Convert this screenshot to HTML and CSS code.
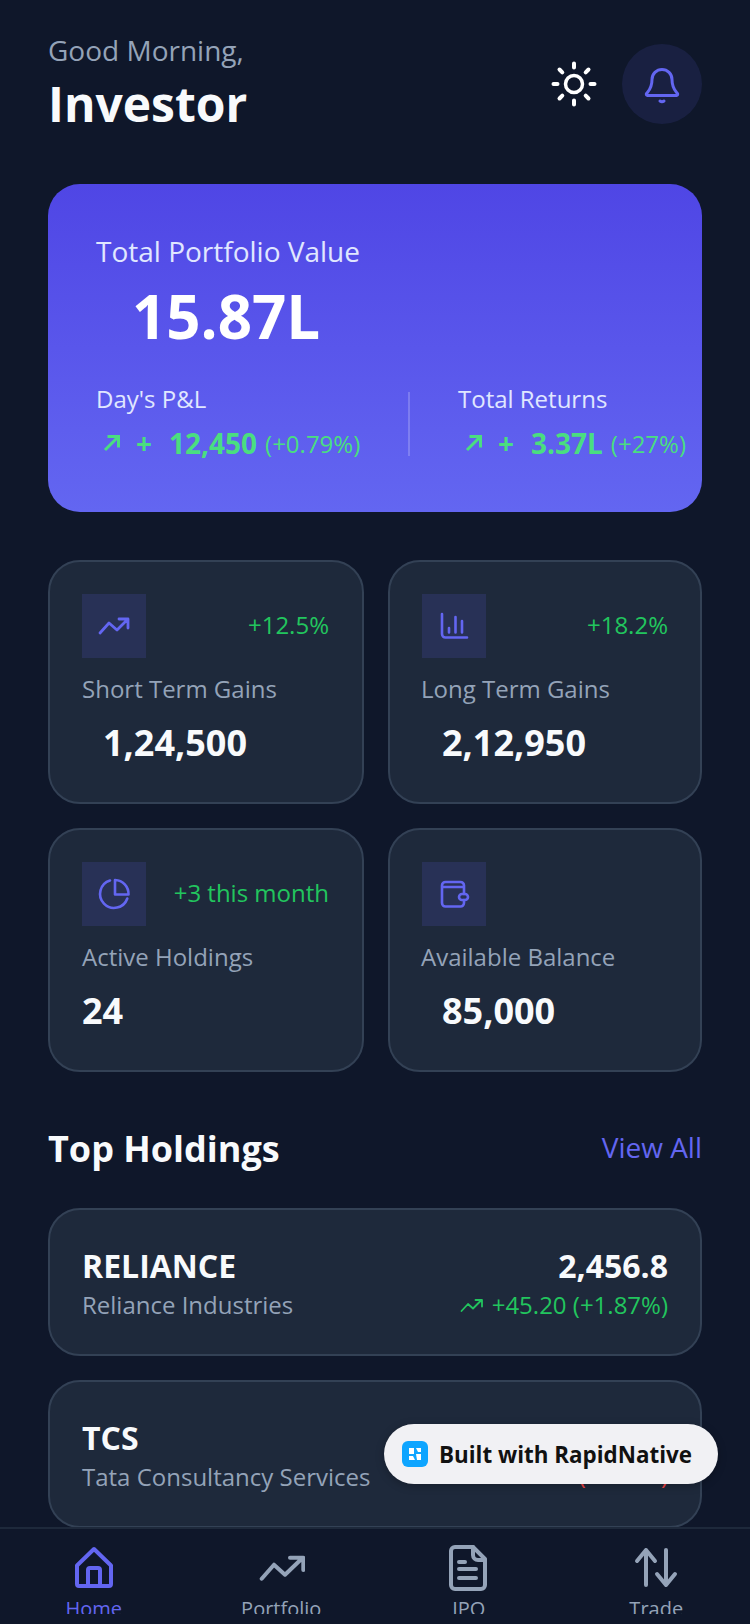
FILE: index.html
```html
<!DOCTYPE html>
<html lang="en">
<head>
<meta charset="utf-8">
<title>Investor Dashboard</title>
<link rel="stylesheet" href="styles.css">
</head>
<body>
<div class="screen">
  <main class="scroll">
    <header class="header">
      <div>
        <div class="greeting">Good Morning,</div>
        <div class="name">Investor</div>
      </div>
      <div class="header-actions">
        <svg class="sun" width="46" height="46" viewBox="0 0 46 46" fill="none" stroke="#fff" stroke-linecap="round">
          <circle cx="23" cy="23" r="8.500" stroke-width="3.500"/>
          <path stroke-width="4" d="M23 2.500v4M23 39.500v4M2.500 23h4M39.500 23h4M8.500 8.500l2.800 2.800M34.700 34.700l2.800 2.800M8.500 37.500l2.800-2.800M34.700 11.300l2.800-2.800"/>
        </svg>
        <div class="bell-btn">
          <svg width="48" height="48" viewBox="0 0 48 48" fill="none" stroke="#6366f1" stroke-width="3" stroke-linecap="round" stroke-linejoin="round">
            <path d="M14 19.500a10 10 0 0 1 20 0c0 9 3.500 11.500 5.500 14a1.300 1.300 0 0 1-1 2h-29a1.300 1.300 0 0 1-1-2c2-2.500 5.500-5 5.500-14z"/>
            <path d="M22 41q2 1.500 4 0"/>
          </svg>
        </div>
      </div>
    </header>

    <section class="hero">
      <div class="hero-label">Total Portfolio Value</div>
      <div class="hero-value">15.87L</div>
      <div class="hero-row">
        <div class="hero-col">
          <div class="hero-sub">Day's P&amp;L</div>
          <div class="hero-change">
            <svg class="hero-arrow" width="18" height="18" viewBox="0 0 18 18" fill="none" stroke="#4ade80" stroke-width="3"><path d="M2 16L15.500 2.500M4.500 2.500h11v11"/></svg>
            <span class="hero-plus">+</span>
            <span class="hero-amount">12,450</span>
            <span class="hero-pct">(+0.79%)</span>
          </div>
        </div>
        <div class="hero-divider"></div>
        <div class="hero-col">
          <div class="hero-sub">Total Returns</div>
          <div class="hero-change">
            <svg class="hero-arrow" width="18" height="18" viewBox="0 0 18 18" fill="none" stroke="#4ade80" stroke-width="3"><path d="M2 16L15.500 2.500M4.500 2.500h11v11"/></svg>
            <span class="hero-plus">+</span>
            <span class="hero-amount">3.37L</span>
            <span class="hero-pct">(+27%)</span>
          </div>
        </div>
      </div>
    </section>

    <section class="stats">
      <article class="card stat">
        <div class="stat-top">
          <div class="icon-box">
            <svg width="64" height="64" viewBox="0 0 64 64" fill="none" stroke="#6366f1" stroke-width="2.800" stroke-linecap="round" stroke-linejoin="round"><path d="M18 39l9-10 8 7 10.500-10.500M37 25h9v9"/></svg>
          </div>
          <span class="stat-delta">+12.5%</span>
        </div>
        <div class="stat-label">Short Term Gains</div>
        <div class="stat-value gap-rupee">1,24,500</div>
      </article>
      <article class="card stat">
        <div class="stat-top">
          <div class="icon-box">
            <svg width="64" height="64" viewBox="0 0 64 64" fill="none" stroke="#6366f1" stroke-width="2.600" stroke-linecap="round" stroke-linejoin="round"><path d="M20 20v20a3.500 3.500 0 0 0 3.500 3.500H45M27 34v4.500M33.500 23v15.500M40 27v11.500"/></svg>
          </div>
          <span class="stat-delta">+18.2%</span>
        </div>
        <div class="stat-label">Long Term Gains</div>
        <div class="stat-value gap-rupee">2,12,950</div>
      </article>
      <article class="card stat">
        <div class="stat-top">
          <div class="icon-box">
            <svg width="64" height="64" viewBox="0 0 64 64" fill="none" stroke="#6366f1" stroke-width="2.600" stroke-linecap="round" stroke-linejoin="round"><path d="M28 18.500A14 14 0 1 0 45.300 36.500M33 18v14.500h13.500A14 14 0 0 0 33 18z"/></svg>
          </div>
          <span class="stat-delta">+3 this month</span>
        </div>
        <div class="stat-label">Active Holdings</div>
        <div class="stat-value">24</div>
      </article>
      <article class="card stat">
        <div class="stat-top">
          <div class="icon-box">
            <svg width="64" height="64" viewBox="0 0 64 64" fill="none" stroke="#6366f1" stroke-width="2.600" stroke-linecap="round" stroke-linejoin="round"><path d="M42 32v-8.500a3.500 3.500 0 0 0-3.500-3.500H23.500a3.500 3.500 0 0 0-3.500 3.500V41a3.500 3.500 0 0 0 3.500 3.500h15A3.500 3.500 0 0 0 42 41v-3M20 25h22"/><rect x="37" y="32" width="9" height="6" rx="3"/></svg>
          </div>
        </div>
        <div class="stat-label">Available Balance</div>
        <div class="stat-value gap-rupee">85,000</div>
      </article>
    </section>

    <div class="section-head">
      <h2 class="section-title">Top Holdings</h2>
      <span class="view-all">View All</span>
    </div>

    <article class="card holding">
      <div>
        <div class="symbol">RELIANCE</div>
        <div class="company">Reliance Industries</div>
      </div>
      <div class="holding-right">
        <div class="price">2,456.8</div>
        <div class="change up">
          <svg width="24" height="16" viewBox="0 0 24 16" fill="none" stroke="#22c55e" stroke-width="1.800" stroke-linecap="round" stroke-linejoin="round"><path d="M1.500 14l6.500-7 5 4.500 8-8M15.500 3h6.500v6.500"/></svg>
          <span>+45.20 (+1.87%)</span>
        </div>
      </div>
    </article>

    <article class="card holding">
      <div>
        <div class="symbol">TCS</div>
        <div class="company">Tata Consultancy Services</div>
      </div>
      <div class="holding-right">
        <div class="price">3,685.4</div>
        <div class="change down"><span>-12.30 (-0.33%)</span></div>
      </div>
    </article>
  </main>

  <nav class="nav">
    <div class="nav-item active">
      <svg width="48" height="48" viewBox="0 0 48 48" fill="none" stroke="#6366f1" stroke-width="4" stroke-linecap="round" stroke-linejoin="round"><path d="M24 6L7 22.500V41a2 2 0 0 0 2 2h30a2 2 0 0 0 2-2V22.500zM18 43V27a2 2 0 0 1 2-2h8a2 2 0 0 1 2 2v16"/></svg>
      <span class="nav-label">Home</span>
    </div>
    <div class="nav-item">
      <svg width="48" height="48" viewBox="0 0 48 48" fill="none" stroke="#94a3b8" stroke-width="4" stroke-linecap="round" stroke-linejoin="round"><path d="M4.700 35.700L17 21.700l11 10 16.700-16M33 14.700h13.300V27"/></svg>
      <span class="nav-label">Portfolio</span>
    </div>
    <div class="nav-item">
      <svg width="48" height="48" viewBox="0 0 48 48" fill="none" stroke="#94a3b8" stroke-width="4" stroke-linecap="round" stroke-linejoin="round"><path d="M10 4h18l12 12v26a4 4 0 0 1-4 4H10a4 4 0 0 1-4-4V8a4 4 0 0 1 4-4z"/><path d="M28 4v8a5 5 0 0 0 5 5h7M14 19h6M14 26h17M14 35h17"/></svg>
      <span class="nav-label">IPO</span>
    </div>
    <div class="nav-item">
      <svg width="48" height="48" viewBox="0 0 48 48" fill="none" stroke="#94a3b8" stroke-width="4" stroke-linecap="round" stroke-linejoin="round"><path d="M14 42V7M5 18L14 7l9 11M34 7v35M25 31l9 11 9-11"/></svg>
      <span class="nav-label">Trade</span>
    </div>
  </nav>

  <div class="badge">
    <svg width="26" height="26" viewBox="0 0 26 26"><rect width="26" height="26" rx="6" fill="#0ea5ff"/><path fill="#fff" d="M7 7h5v6H7zM14 7h5v4h-3zM7 15h4l2 4H7zM14 13h5v6h-4z"/></svg>
    <span class="badge-text">Built with RapidNative</span>
  </div>
</div>
</body>
</html>
```

FILE: styles.css
```css
* { box-sizing: border-box; margin: 0; padding: 0; }
html, body { background: #0f172a; }
body { font-family: "Open Sans", "Noto Sans", sans-serif; }

.screen {
  position: relative;
  width: 750px;
  height: 1624px;
  overflow: hidden;
  display: flex;
  flex-direction: column;
  background: #0f172a;
}
.scroll {
  height: 1527px;
  flex: none;
  overflow: hidden;
  padding: 36px 48px 0;
}

.header {
  display: flex;
  justify-content: space-between;
  align-items: center;
  height: 96px;
  margin-bottom: 52px;
}
.greeting { font-size: 28px; line-height: 40px; color: #94a3b8; margin-top: -2px; margin-bottom: 2px; }
.name { font-size: 48px; line-height: 64px; color: #f8fafc; font-weight: 700; }
.header-actions { display: flex; align-items: center; gap: 25px; }
.sun { display: block; }
.bell-btn {
  width: 80px;
  height: 80px;
  border-radius: 50%;
  background: rgba(99, 102, 241, 0.12);
  display: flex;
  align-items: center;
  justify-content: center;
}

.hero {
  height: 328px;
  border-radius: 32px;
  padding: 46px 16px 0 48px;
  background: linear-gradient(180deg, #4f46e5 0%, #6366f1 100%);
}
.hero-label { font-size: 28px; line-height: 42px; color: #e0e7ff; }
.hero-value { font-size: 60px; line-height: 84px; color: #fff; font-weight: 700; margin-left: 36px; margin-top: 2px; }
.hero-row { display: flex; align-items: flex-start; margin-top: 24px; }
.hero-col { flex: none; }
.hero-col:first-child { width: 312px; }
.hero-col:last-child { margin-left: 48px; }
.hero-divider { width: 2px; height: 64px; background: rgba(255, 255, 255, 0.2); margin-top: 10px; }
.hero-sub { font-size: 24px; line-height: 34px; color: #e0e7ff; }
.hero-change { display: flex; align-items: center; height: 44px; margin-top: 5px; color: #4ade80; white-space: nowrap; }
.hero-arrow { margin-left: 7px; margin-right: 15px; flex: none; }
.hero-plus { font-size: 28px; font-weight: 700; margin-right: 17px; }
.hero-amount { font-size: 28px; font-weight: 700; margin-right: 8px; }
.hero-pct { font-size: 24px; }

.card { background: #1e293b; border: 2px solid #334155; border-radius: 32px; }

.stats {
  display: grid;
  grid-template-columns: 316px 314px;
  column-gap: 24px;
  row-gap: 24px;
  margin-top: 48px;
}
.stat { height: 244px; padding: 32px 32px 0; }
.stat:nth-child(odd) { padding-right: 33px; }
.stat:nth-child(even) { padding-left: 31px; }
.stat:nth-child(even) .icon-box { margin-left: 1px; }
.stat-top { display: flex; justify-content: space-between; align-items: center; height: 64px; }
.icon-box { width: 64px; height: 64px; background: rgba(99, 102, 241, 0.15); }
.icon-box svg { display: block; }
.stat-delta { font-size: 24px; color: #22c55e; margin-top: -4px; }
.stat-label { font-size: 24px; line-height: 34px; color: #94a3b8; margin-top: 14px; }
.stat-value { font-size: 36px; line-height: 50px; color: #f8fafc; font-weight: 700; margin-top: 12px; }
.gap-rupee { margin-left: 21px; }

.section-head { display: flex; justify-content: space-between; align-items: center; margin-top: 51px; height: 52px; }
.section-title { font-size: 36px; line-height: 52px; color: #f8fafc; font-weight: 700; }
.view-all { font-size: 28px; color: #6366f1; margin-top: -4px; }

.holding {
  height: 148px;
  margin-top: 33px;
  padding: 0 32px;
  display: flex;
  justify-content: space-between;
  align-items: center;
}
.holding + .holding { margin-top: 24px; }
.symbol, .price { font-size: 32px; line-height: 42px; color: #f8fafc; font-weight: 700; margin-top: 3px; margin-bottom: 1px; }
.company { font-size: 24px; line-height: 34px; color: #94a3b8; }
.holding-right { text-align: right; }
.change { display: flex; justify-content: flex-end; align-items: center; gap: 8px; font-size: 24px; line-height: 34px; }
.change.up { color: #22c55e; }
.change.down { color: #ef4444; margin-top: -4px; }

.nav {
  flex: 1;
  display: grid;
  grid-template-columns: repeat(4, 1fr);
  border-top: 2px solid #1e293b;
  background: #0f172a;
  padding-top: 14px;
  position: relative;
}
.nav-item {
  display: flex;
  flex-direction: column;
  align-items: center;
  height: 71px;
  overflow: hidden;
}
.nav-item svg { flex: none; display: block; }
.nav-label { font-size: 20px; line-height: 30px; color: #94a3b8; margin-top: 3px; }
.nav-item.active .nav-label { color: #6366f1; }

.badge {
  position: absolute;
  left: 384px;
  top: 1424px;
  width: 334px;
  height: 60px;
  border-radius: 30px;
  background: #f1f1f4;
  box-shadow: 0 2px 8px rgba(0, 0, 0, 0.25);
  display: flex;
  align-items: center;
  padding-left: 18px;
  gap: 11px;
}
.badge svg { display: block; flex: none; }
.badge-text { font-size: 22.4px; font-weight: 700; color: #111; white-space: nowrap; }
```
